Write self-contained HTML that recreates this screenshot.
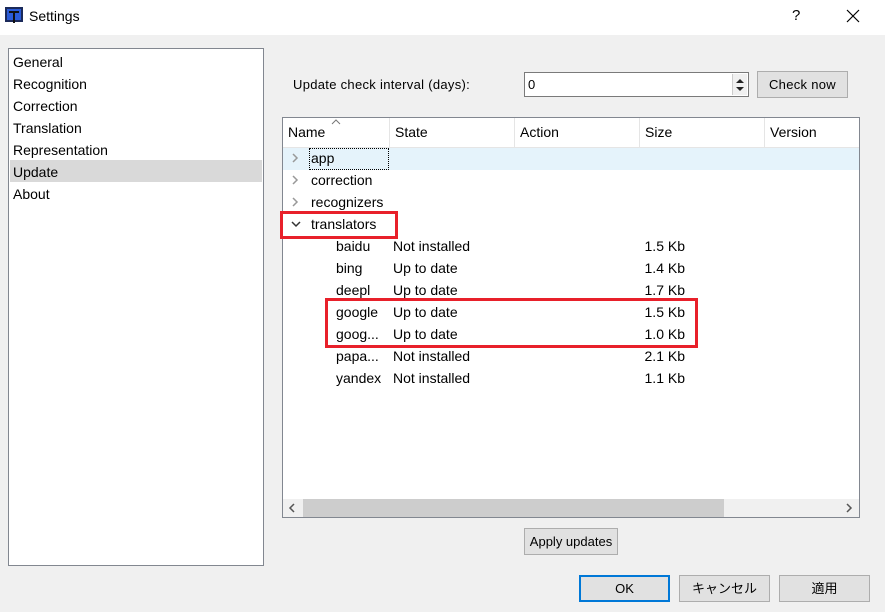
<!DOCTYPE html>
<html><head><meta charset="utf-8"><style>
*{margin:0;padding:0;box-sizing:border-box}
body{width:885px;height:612px;background:#f0f0f0;font-family:"Liberation Sans","Noto Sans CJK JP",sans-serif;font-size:14px;color:#000;position:relative;overflow:hidden}
.a{position:absolute;white-space:nowrap}
.btn{position:absolute;background:#e1e1e1;border:1px solid #adadad;font-size:13px;text-align:center}
.row{position:absolute;left:0;height:22px;line-height:22px;width:100%}
.red{position:absolute;border:3px solid #e8202a}
</style></head><body>
<div class="a" style="left:0;top:0;width:885px;height:35px;background:#fff"></div>
<svg class="a" style="left:5px;top:7px" width="18" height="18"><rect x="0" y="0" width="18" height="15" fill="#1b2a5a"/><rect x="2" y="2" width="14" height="11" fill="#2a5bd7"/><path d="M4 4h10v2h-4v10h-2V6H4z" fill="#111"/></svg>
<div class="a" style="left:29px;top:8px;font-size:14px">Settings</div>
<div class="a" style="left:792px;top:7px;font-size:15px">?</div>
<svg class="a" style="left:846px;top:9px" width="14" height="14"><path d="M1 1L13 13M13 1L1 13" stroke="#000" stroke-width="1.2"/></svg>

<div class="a" style="left:8px;top:48px;width:256px;height:518px;background:#fff;border:1px solid #828790"></div>
<div class="a" style="left:10px;top:160px;width:252px;height:22px;background:#d9d9d9"></div>
<div class="a" style="left:13px;top:51px;line-height:22px">General<br>Recognition<br>Correction<br>Translation<br>Representation<br>Update<br>About</div>

<div class="a" style="left:293px;top:77px;font-size:13px;letter-spacing:0.3px">Update check interval (days):</div>
<div class="a" style="left:524px;top:72px;width:225px;height:25px;background:#fff;border:1px solid #7a7a7a"></div>
<div class="a" style="left:528px;top:77px;font-size:13px">0</div>
<div class="a" style="left:732px;top:74px;width:15px;height:21px;background:#f0f0f0;border-left:1px solid #ccc"></div>
<svg class="a" style="left:734px;top:76px" width="12" height="18"><path d="M2 7L6 3L10 7z M2 11L6 15L10 11z" fill="#222"/></svg>
<div class="btn" style="left:757px;top:71px;width:91px;height:27px;line-height:25px;letter-spacing:0.3px">Check now</div>

<div class="a" style="left:282px;top:117px;width:578px;height:401px;background:#fff;border:1px solid #828790;overflow:hidden">
 <div class="a" style="left:0;top:0;width:578px;height:30px;border-bottom:1px solid #e5e5e5"></div>
 <div class="a" style="left:106px;top:0;height:30px;border-left:1px solid #e5e5e5"></div>
 <div class="a" style="left:231px;top:0;height:30px;border-left:1px solid #e5e5e5"></div>
 <div class="a" style="left:356px;top:0;height:30px;border-left:1px solid #e5e5e5"></div>
 <div class="a" style="left:481px;top:0;height:30px;border-left:1px solid #e5e5e5"></div>
 <svg class="a" style="left:48px;top:1px" width="10" height="6"><path d="M1 5L5 1L9 5" stroke="#777" fill="none"/></svg>
 <div class="a" style="left:5px;top:6px">Name</div>
 <div class="a" style="left:112px;top:6px">State</div>
 <div class="a" style="left:237px;top:6px">Action</div>
 <div class="a" style="left:362px;top:6px">Size</div>
 <div class="a" style="left:487px;top:6px">Version</div>
 <div class="row" style="top:30px;background:#e5f3fb"></div>
 <div class="a" style="left:26px;top:30px;width:80px;height:22px;border:1px dotted #000"></div>
 <svg class="a" style="left:8px;top:35px" width="10" height="80"><path d="M2 1L6 5L2 9M2 23L6 27L2 31M2 45L6 49L2 53" stroke="#999" stroke-width="1.5" fill="none"/><path d="M1 69L5 73L9 69" stroke="#333" stroke-width="1.5" fill="none"/></svg>
 <div class="a" style="left:28px;top:29px;line-height:22px">app<br>correction<br>recognizers<br>translators</div>
 <div class="a" style="left:53px;top:117px;line-height:22px">baidu<br>bing<br>deepl<br>google<br>goog...<br>papa...<br>yandex</div>
 <div class="a" style="left:110px;top:117px;line-height:22px">Not installed<br>Up to date<br>Up to date<br>Up to date<br>Up to date<br>Not installed<br>Not installed</div>
 <div class="a" style="left:340px;top:117px;width:62px;text-align:right;line-height:22px">1.5 Kb<br>1.4 Kb<br>1.7 Kb<br>1.5 Kb<br>1.0 Kb<br>2.1 Kb<br>1.1 Kb</div>
 <div class="a" style="left:0;top:381px;width:576px;height:18px;background:#f0f0f0"></div>
 <div class="a" style="left:20px;top:381px;width:421px;height:18px;background:#cdcdcd"></div>
 <svg class="a" style="left:5px;top:385px" width="8" height="10"><path d="M6 1L2 5L6 9" stroke="#555" stroke-width="1.5" fill="none"/></svg>
 <svg class="a" style="left:562px;top:385px" width="8" height="10"><path d="M2 1L6 5L2 9" stroke="#555" stroke-width="1.5" fill="none"/></svg>
</div>
<div class="red" style="left:280px;top:211px;width:118px;height:28px"></div>
<div class="red" style="left:325px;top:298px;width:373px;height:50px"></div>

<div class="btn" style="left:524px;top:528px;width:94px;height:27px;line-height:25px">Apply updates</div>
<div class="btn" style="left:579px;top:575px;width:91px;height:27px;line-height:23px;border:2px solid #0078d7">OK</div>
<div class="btn" style="left:679px;top:575px;width:91px;height:27px;line-height:25px">キャンセル</div>
<div class="btn" style="left:779px;top:575px;width:91px;height:27px;line-height:25px">適用</div>
</body></html>
